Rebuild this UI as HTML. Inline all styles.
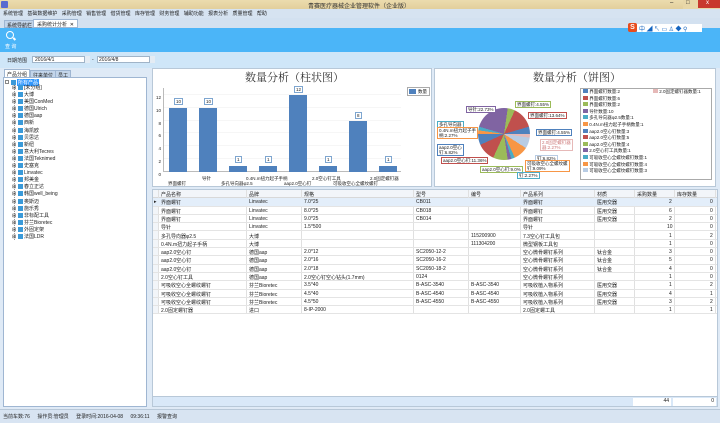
<!DOCTYPE html>
<html><head><meta charset="utf-8"><style>
*{margin:0;padding:0;box-sizing:border-box}
body{width:720px;height:423px;overflow:hidden;background:#dfe9f5;font-family:"Liberation Sans","Noto Sans CJK SC",sans-serif;font-size:5px;color:#222;position:relative}
.a{position:absolute}
.t{white-space:nowrap}
.row{position:absolute;left:0;width:566px;height:8.3px;border-bottom:1px solid #e4e4e4}
.row span,.hd span{position:absolute;top:1px;white-space:nowrap}
.vl{position:absolute;top:0;width:1px;background:#e0e0e0;height:124px}
.lab{position:absolute;border:1px solid #7ea6d0;background:#fff;font-size:4.5px;padding:0 1px;white-space:nowrap;line-height:5px}
</style></head><body>
<!-- title bar -->
<div class="a" style="left:0;top:0;width:720px;height:9px;background:linear-gradient(#ecdcae,#e2cf9c)"></div>
<div class="a" style="left:1px;top:1px;width:7px;height:7px;background:#5a6bd0;border-radius:1px"></div>
<div class="a t" style="left:308px;top:1px;font-size:6px;color:#333">青赛医疗器械企业管理软件（企业版）</div>
<div class="a" style="left:683px;top:0;width:37px;height:9px;background:#e8d7a8"></div>
<div class="a" style="left:698px;top:0;width:22px;height:8px;background:#c8392e"></div>
<div class="a t" style="left:706px;top:0;color:#fff;font-size:6px">x</div>
<div class="a t" style="left:670px;top:0;font-size:6px">–</div>
<div class="a t" style="left:686px;top:0;font-size:6px">□</div>
<!-- menu -->
<div class="a" style="left:0;top:9px;width:720px;height:9px;background:#d6e3f1"></div>
<div class="a t" style="left:3px;top:10px;word-spacing:3px">系统管理 基础数据维护 采购管理 销售管理 借货管理 库存管理 财务管理 辅助功能 报表分析 质量管理 帮助</div>
<!-- tabs -->
<div class="a" style="left:0;top:18px;width:720px;height:10px;background:#d3e1f0"></div>
<div class="a t" style="left:4px;top:20px;height:8px;padding:1px 2px;background:#c3d5ea;border:1px solid #9fb6d2">系统导航栏</div>
<div class="a t" style="left:33px;top:19px;height:9px;padding:1px 3px;background:#fff;border:1px solid #9fb6d2">采购统计分析 &nbsp;✕</div>
<!-- toolbar -->
<div class="a" style="left:0;top:28px;width:720px;height:24px;background:#4bb5f8"></div>
<div class="a" style="left:6px;top:31px;width:8px;height:8px;border:1.5px solid #fff;border-radius:50%"></div>
<div class="a" style="left:13px;top:38px;width:3px;height:1.5px;background:#fff;transform:rotate(45deg)"></div>
<div class="a t" style="left:5px;top:43px;color:#fff;font-size:5px">查 询</div>
<div class="a" style="left:628px;top:23px;width:9px;height:9px;background:#e84c1e;border-radius:2px;color:#fff;font-size:7px;text-align:center;line-height:9px;font-weight:bold">S</div>
<div class="a" style="left:637px;top:24px;width:65px;height:8px;background:#fff"></div>
<div class="a t" style="left:639px;top:24px;color:#1565c0;font-size:6px;letter-spacing:1.5px">中◢↖▭♙◆⚲</div>
<!-- date row -->
<div class="a" style="left:0;top:52px;width:720px;height:16px;background:#cfe6f8"></div>
<div class="a t" style="left:7px;top:57px">日期范围</div>
<div class="a" style="left:32px;top:56px;width:58px;height:7px;background:#fff;border:1px solid #a0b4c8"></div>
<div class="a t" style="left:35px;top:57px">2016/4/1</div>
<div class="a" style="left:84px;top:56px;width:6px;height:7px;background:#e4ecf4;border-left:1px solid #a0b4c8"></div>
<div class="a t" style="left:92px;top:57px">-</div>
<div class="a" style="left:97px;top:56px;width:58px;height:7px;background:#fff;border:1px solid #a0b4c8"></div>
<div class="a t" style="left:99px;top:57px">2016/4/8</div>
<div class="a" style="left:149px;top:56px;width:6px;height:7px;background:#e4ecf4;border-left:1px solid #a0b4c8"></div>
<!-- left panel -->
<div class="a" style="left:0;top:68px;width:150px;height:340px;background:#dfeaf6"></div>
<div class="a t" style="left:4px;top:69px;height:9px;padding:1px 2px;background:#fff;border:1px solid #9fb6d2">产品分组</div>
<div class="a t" style="left:30px;top:70px;height:8px;padding:1px 2px;background:#c3d5ea;border:1px solid #9fb6d2">往来单位</div>
<div class="a t" style="left:55px;top:70px;height:8px;padding:1px 2px;background:#c3d5ea;border:1px solid #9fb6d2">员工</div>
<div class="a" style="left:3px;top:77px;width:144px;height:330px;background:#fff;border:1px solid #9fb6d2"></div>
<div class="a" style="left:5px;top:80px;width:1px;height:160px;border-left:1px dotted #999;left:14px;top:84px;height:156px"></div>
<div class="a" style="left:5px;top:80px;width:4px;height:4px;border:1px solid #888"></div>
<div class="a" style="left:11px;top:80px;width:5px;height:5px;background:#3a9ad9"></div>
<div class="a t" style="left:17px;top:79px;background:#3399ff;color:#fff;padding:0 1px">所有产品</div>
<div class="a" style="left:12px;top:85px;line-height:7.1px">
<div class="t">⊞ <span style="display:inline-block;width:5px;height:5px;background:#3a9ad9;vertical-align:-1px"></span> [未分组]</div>
<div class="t">⊞ <span style="display:inline-block;width:5px;height:5px;background:#3a9ad9;vertical-align:-1px"></span> 大博</div>
<div class="t">⊞ <span style="display:inline-block;width:5px;height:5px;background:#3a9ad9;vertical-align:-1px"></span> 美国ConMed</div>
<div class="t">⊞ <span style="display:inline-block;width:5px;height:5px;background:#3a9ad9;vertical-align:-1px"></span> 德国Ulrich</div>
<div class="t">⊞ <span style="display:inline-block;width:5px;height:5px;background:#3a9ad9;vertical-align:-1px"></span> 德国aap</div>
<div class="t">⊞ <span style="display:inline-block;width:5px;height:5px;background:#3a9ad9;vertical-align:-1px"></span> 西新</div>
<div class="t">⊞ <span style="display:inline-block;width:5px;height:5px;background:#3a9ad9;vertical-align:-1px"></span> 海凯欧</div>
<div class="t">⊞ <span style="display:inline-block;width:5px;height:5px;background:#3a9ad9;vertical-align:-1px"></span> 贝思达</div>
<div class="t">⊞ <span style="display:inline-block;width:5px;height:5px;background:#3a9ad9;vertical-align:-1px"></span> 新纽</div>
<div class="t">⊞ <span style="display:inline-block;width:5px;height:5px;background:#3a9ad9;vertical-align:-1px"></span> 意大利Tecres</div>
<div class="t">⊞ <span style="display:inline-block;width:5px;height:5px;background:#3a9ad9;vertical-align:-1px"></span> 法国Teknimed</div>
<div class="t">⊞ <span style="display:inline-block;width:5px;height:5px;background:#3a9ad9;vertical-align:-1px"></span> 史塞克</div>
<div class="t">⊞ <span style="display:inline-block;width:5px;height:5px;background:#3a9ad9;vertical-align:-1px"></span> Linvatec</div>
<div class="t">⊞ <span style="display:inline-block;width:5px;height:5px;background:#3a9ad9;vertical-align:-1px"></span> 邦美金</div>
<div class="t">⊞ <span style="display:inline-block;width:5px;height:5px;background:#3a9ad9;vertical-align:-1px"></span> 春立正达</div>
<div class="t">⊞ <span style="display:inline-block;width:5px;height:5px;background:#3a9ad9;vertical-align:-1px"></span> 韩国well_being</div>
<div class="t">⊞ <span style="display:inline-block;width:5px;height:5px;background:#3a9ad9;vertical-align:-1px"></span> 奥斯迈</div>
<div class="t">⊞ <span style="display:inline-block;width:5px;height:5px;background:#3a9ad9;vertical-align:-1px"></span> 施乐秀</div>
<div class="t">⊞ <span style="display:inline-block;width:5px;height:5px;background:#3a9ad9;vertical-align:-1px"></span> 非标配工具</div>
<div class="t">⊞ <span style="display:inline-block;width:5px;height:5px;background:#3a9ad9;vertical-align:-1px"></span> 芬兰Bioretec</div>
<div class="t">⊞ <span style="display:inline-block;width:5px;height:5px;background:#3a9ad9;vertical-align:-1px"></span> 外固定架</div>
<div class="t">⊞ <span style="display:inline-block;width:5px;height:5px;background:#3a9ad9;vertical-align:-1px"></span> 法国LDR</div>
</div>
<!-- right area -->
<div class="a" style="left:150px;top:68px;width:570px;height:340px;background:#dfeaf6"></div>
<!-- bar chart -->
<div class="a" style="left:152px;top:68px;width:280px;height:119px;background:#fff;border:1px solid #b8c8d8"></div>
<div class="a t" style="left:245px;top:69px;font-family:'Noto Serif CJK SC',serif;font-size:11px;color:#333">数量分析（柱状图）</div>
<div class="a" style="left:163px;top:88px;width:238px;height:84px;border-left:1px solid #bbb;border-bottom:1px solid #bbb;background:repeating-linear-gradient(to top,transparent 0,transparent 12.3px,#eee 12.3px,#eee 12.8px)"></div>
<div class="a" style="left:155px;top:92px;line-height:12.8px;font-size:4.5px;text-align:right;width:6px">12<br>10<br>8<br>6<br>4<br>2<br>0</div>
<div class="a" style="left:169px;top:108px;width:18px;height:64px;background:#4f81bd"></div>
<div class="a" style="left:199px;top:108px;width:18px;height:64px;background:#4f81bd"></div>
<div class="a" style="left:229px;top:165.6px;width:18px;height:6.4px;background:#4f81bd"></div>
<div class="a" style="left:259px;top:165.6px;width:18px;height:6.4px;background:#4f81bd"></div>
<div class="a" style="left:289px;top:95px;width:18px;height:77px;background:#4f81bd"></div>
<div class="a" style="left:319px;top:165.6px;width:18px;height:6.4px;background:#4f81bd"></div>
<div class="a" style="left:349px;top:121px;width:18px;height:51px;background:#4f81bd"></div>
<div class="a" style="left:379px;top:165.6px;width:18px;height:6.4px;background:#4f81bd"></div>
<div class="lab" style="left:174px;top:98px">10</div>
<div class="lab" style="left:204px;top:98px">10</div>
<div class="lab" style="left:235px;top:156px">1</div>
<div class="lab" style="left:265px;top:156px">1</div>
<div class="lab" style="left:294px;top:86px">12</div>
<div class="lab" style="left:325px;top:156px">1</div>
<div class="lab" style="left:355px;top:112px">8</div>
<div class="lab" style="left:385px;top:156px">1</div>
<div class="a t" style="left:168px;top:181px;font-size:4.5px">界面螺钉</div>
<div class="a t" style="left:202px;top:176px;font-size:4.5px">导针</div>
<div class="a t" style="left:221px;top:181px;font-size:4.5px">多孔导向器φ2.5</div>
<div class="a t" style="left:246px;top:176px;font-size:4.5px">0.4N.m扭力起子手柄</div>
<div class="a t" style="left:284px;top:181px;font-size:4.5px">aap2.0空心钉</div>
<div class="a t" style="left:312px;top:176px;font-size:4.5px">2.0空心钉工具</div>
<div class="a t" style="left:333px;top:181px;font-size:4.5px">可吸收空心全螺纹螺钉</div>
<div class="a t" style="left:370px;top:176px;font-size:4.5px">2.0固定螺钉器</div>
<div class="a" style="left:407px;top:87px;width:23px;height:9px;border:1px solid #aaa"></div>
<div class="a" style="left:409px;top:89px;width:7px;height:5px;background:#4f81bd"></div>
<div class="a t" style="left:418px;top:89px;font-size:4.5px">数量</div>
<!-- pie chart -->
<div class="a" style="left:434px;top:68px;width:282px;height:119px;background:#fff;border:1px solid #b8c8d8"></div>
<div class="a t" style="left:533px;top:69px;font-family:'Noto Serif CJK SC',serif;font-size:11px;color:#333">数量分析（饼图）</div>
<div class="a" style="left:478px;top:108px;width:52px;height:52px;border-radius:50%;background:conic-gradient(from 90deg,#e6b9b8 0 8.2deg,#b8cce4 8.2deg 32.7deg,#f79646 32.7deg 65.5deg,#4bacc6 65.5deg 73.6deg,#8064a2 73.6deg 81.8deg,#9bbb59 81.8deg 114.5deg,#c0504d 114.5deg 155.5deg,#4f81bd 155.5deg 180deg,#f79646 180deg 188.2deg,#4bacc6 188.2deg 196.4deg,#8064a2 196.4deg 278.2deg,#9bbb59 278.2deg 294.5deg,#c0504d 294.5deg 343.6deg,#4f81bd 343.6deg 360deg)"></div>
<div class="lab" style="left:466px;top:106px;border-color:#8064a2">导针:22.73%</div>
<div class="lab" style="left:515px;top:101px;border-color:#9bbb59">界面螺钉:4.55%</div>
<div class="lab" style="left:528px;top:112px;border-color:#c0504d">界面螺钉:13.64%</div>
<div class="lab" style="left:536px;top:129px;border-color:#4f81bd">界面螺钉:4.55%</div>
<div class="lab" style="left:437px;top:121px;border-color:#4bacc6">多孔导向器</div>
<div class="lab" style="left:437px;top:127px;border-color:#f79646">0.4N.m扭力起子手<br>柄:2.27%</div>
<div class="lab" style="left:437px;top:144px;border-color:#4f81bd">aap2.0空心<br>钉:6.82%</div>
<div class="lab" style="left:441px;top:157px;border-color:#c0504d">aap2.0空心钉:11.36%</div>
<div class="lab" style="left:480px;top:166px;border-color:#9bbb59">aap2.0空心钉:9.0%</div>
<div class="lab" style="left:540px;top:139px;border-color:#e6b9b8;color:#c77">2.0固定螺钉器<br>器:2.27%</div>
<div class="lab" style="left:535px;top:155px;border-color:#b8cce4">钉:6.82%</div>
<div class="lab" style="left:525px;top:160px;border-color:#f79646">可吸收空心全螺纹螺<br>钉:9.09%</div>
<div class="lab" style="left:517px;top:172px;border-color:#4bacc6">钉:2.27%</div>
<div class="a" style="left:580px;top:88px;width:132px;height:92px;border:1px solid #aaa"></div>
<div class="a" style="left:583px;top:89px;line-height:6.6px;font-size:4.5px">
<div class="t"><i style="display:inline-block;width:5px;height:4px;background:#4f81bd"></i> 界面螺钉数量:2</div>
<div class="t"><i style="display:inline-block;width:5px;height:4px;background:#c0504d"></i> 界面螺钉数量:6</div>
<div class="t"><i style="display:inline-block;width:5px;height:4px;background:#9bbb59"></i> 界面螺钉数量:2</div>
<div class="t"><i style="display:inline-block;width:5px;height:4px;background:#8064a2"></i> 导针数量:10</div>
<div class="t"><i style="display:inline-block;width:5px;height:4px;background:#4bacc6"></i> 多孔导向器φ2.5数量:1</div>
<div class="t"><i style="display:inline-block;width:5px;height:4px;background:#f79646"></i> 0.4N.m扭力起子手柄数量:1</div>
<div class="t"><i style="display:inline-block;width:5px;height:4px;background:#4f81bd"></i> aap2.0空心钉数量:3</div>
<div class="t"><i style="display:inline-block;width:5px;height:4px;background:#c0504d"></i> aap2.0空心钉数量:5</div>
<div class="t"><i style="display:inline-block;width:5px;height:4px;background:#9bbb59"></i> aap2.0空心钉数量:4</div>
<div class="t"><i style="display:inline-block;width:5px;height:4px;background:#8064a2"></i> 2.0空心钉工具数量:1</div>
<div class="t"><i style="display:inline-block;width:5px;height:4px;background:#4bacc6"></i> 可吸收空心全螺纹螺钉数量:1</div>
<div class="t"><i style="display:inline-block;width:5px;height:4px;background:#f79646"></i> 可吸收空心全螺纹螺钉数量:4</div>
<div class="t"><i style="display:inline-block;width:5px;height:4px;background:#b8cce4"></i> 可吸收空心全螺纹螺钉数量:3</div>
</div>
<div class="a t" style="left:653px;top:89px;font-size:4.5px"><i style="display:inline-block;width:5px;height:4px;background:#e6b9b8"></i> 2.0固定螺钉器数量:1</div>
<!-- table -->
<div class="a" style="left:152px;top:189px;width:566px;height:208px;background:#fff;border:1px solid #b8c8d8;overflow:hidden">
<div class="hd" style="position:absolute;left:0;top:0;width:566px;height:8px;background:#f2f5f9;border-bottom:1px solid #d8d8d8">
<span style="left:8px">产品名称</span><span style="left:96px">品牌</span><span style="left:151px">规格</span><span style="left:263px">型号</span><span style="left:318px">编号</span><span style="left:370px">产品系列</span><span style="left:444px">材质</span><span style="left:484px">采购数量</span><span style="left:524px">库存数量</span></div>
<div class="vl" style="left:5px"></div><div class="vl" style="left:93px"></div><div class="vl" style="left:148px"></div><div class="vl" style="left:260px"></div><div class="vl" style="left:315px"></div><div class="vl" style="left:367px"></div><div class="vl" style="left:441px"></div><div class="vl" style="left:481px"></div><div class="vl" style="left:521px"></div><div class="vl" style="left:562px"></div>
<div class="a" style="left:0;top:8px;width:5px;height:116px;background:#f2f5f9"></div>
<div class="row" style="top:8.3px;background:#e3eefa"><span style="left:1px">▸</span><span style="left:8px">界面螺钉</span><span style="left:96px">Linvatec</span><span style="left:151px">7.0*25</span><span style="left:263px">CB011</span><span style="left:370px">界面螺钉</span><span style="left:444px">医用交器</span><span style="left:516px">2</span><span style="left:557px">0</span></div>
<div class="row" style="top:16.6px"><span style="left:8px">界面螺钉</span><span style="left:96px">Linvatec</span><span style="left:151px">8.0*25</span><span style="left:263px">CB018</span><span style="left:370px">界面螺钉</span><span style="left:444px">医用交器</span><span style="left:516px">6</span><span style="left:557px">0</span></div>
<div class="row" style="top:24.9px"><span style="left:8px">界面螺钉</span><span style="left:96px">Linvatec</span><span style="left:151px">9.0*25</span><span style="left:263px">CB014</span><span style="left:370px">界面螺钉</span><span style="left:444px">医用交器</span><span style="left:516px">2</span><span style="left:557px">0</span></div>
<div class="row" style="top:33.2px"><span style="left:8px">导针</span><span style="left:96px">Linvatec</span><span style="left:151px">1.5*500</span><span style="left:370px">导针</span><span style="left:514px">10</span><span style="left:557px">0</span></div>
<div class="row" style="top:41.5px"><span style="left:8px">多孔导向器φ2.5</span><span style="left:96px">大博</span><span style="left:318px">115200900</span><span style="left:370px">7.3空心钉工具包</span><span style="left:516px">1</span><span style="left:557px">2</span></div>
<div class="row" style="top:49.8px"><span style="left:8px">0.4N.m扭力起子手柄</span><span style="left:96px">大博</span><span style="left:318px">111304200</span><span style="left:370px">微型钢板工具包</span><span style="left:516px">1</span><span style="left:557px">0</span></div>
<div class="row" style="top:58.1px"><span style="left:8px">aap2.0空心钉</span><span style="left:96px">德国aap</span><span style="left:151px">2.0*12</span><span style="left:263px">SC2050-12-2</span><span style="left:370px">空心微骨螺钉系列</span><span style="left:444px">钛合金</span><span style="left:516px">3</span><span style="left:557px">0</span></div>
<div class="row" style="top:66.4px"><span style="left:8px">aap2.0空心钉</span><span style="left:96px">德国aap</span><span style="left:151px">2.0*16</span><span style="left:263px">SC2050-16-2</span><span style="left:370px">空心微骨螺钉系列</span><span style="left:444px">钛合金</span><span style="left:516px">5</span><span style="left:557px">0</span></div>
<div class="row" style="top:74.7px"><span style="left:8px">aap2.0空心钉</span><span style="left:96px">德国aap</span><span style="left:151px">2.0*18</span><span style="left:263px">SC2050-18-2</span><span style="left:370px">空心微骨螺钉系列</span><span style="left:444px">钛合金</span><span style="left:516px">4</span><span style="left:557px">0</span></div>
<div class="row" style="top:83px"><span style="left:8px">2.0空心钉工具</span><span style="left:96px">德国aap</span><span style="left:151px">2.0空心钉空心钻头(1.7mm)</span><span style="left:263px">0124</span><span style="left:370px">空心微骨螺钉系列</span><span style="left:516px">1</span><span style="left:557px">0</span></div>
<div class="row" style="top:91.3px"><span style="left:8px">可吸收空心全螺纹螺钉</span><span style="left:96px">芬兰Bioretec</span><span style="left:151px">3.5*40</span><span style="left:263px">B-ASC-3540</span><span style="left:318px">B-ASC-3540</span><span style="left:370px">可吸收植入物系列</span><span style="left:444px">医用交器</span><span style="left:516px">1</span><span style="left:557px">2</span></div>
<div class="row" style="top:99.6px"><span style="left:8px">可吸收空心全螺纹螺钉</span><span style="left:96px">芬兰Bioretec</span><span style="left:151px">4.5*40</span><span style="left:263px">B-ASC-4540</span><span style="left:318px">B-ASC-4540</span><span style="left:370px">可吸收植入物系列</span><span style="left:444px">医用交器</span><span style="left:516px">4</span><span style="left:557px">1</span></div>
<div class="row" style="top:107.9px"><span style="left:8px">可吸收空心全螺纹螺钉</span><span style="left:96px">芬兰Bioretec</span><span style="left:151px">4.5*50</span><span style="left:263px">B-ASC-4550</span><span style="left:318px">B-ASC-4550</span><span style="left:370px">可吸收植入物系列</span><span style="left:444px">医用交器</span><span style="left:516px">3</span><span style="left:557px">2</span></div>
<div class="row" style="top:116.2px"><span style="left:8px">2.0固定螺钉器</span><span style="left:96px">进口</span><span style="left:151px">8-IP-2000</span><span style="left:370px">2.0固定螺工具</span><span style="left:516px">1</span><span style="left:557px">1</span></div>
</div>
<div class="a" style="left:152px;top:396px;width:566px;height:11px;background:#d9e8f8;border:1px solid #b8c8d8"></div>
<div class="a" style="left:633px;top:398px;width:38px;height:8px;background:#fff;text-align:right;padding-right:2px">44</div>
<div class="a" style="left:673px;top:398px;width:43px;height:8px;background:#fff;text-align:right;padding-right:2px">0</div>
<!-- status -->
<div class="a" style="left:0;top:409px;width:720px;height:14px;background:#d8e4f2;border-top:1px solid #b8c8d8"></div>
<div class="a t" style="left:3px;top:413px;word-spacing:6px">当前车数:76 操作员:管理员 登录时间:2016-04-08&nbsp;09:36:11 报警查询</div>
</body></html>
